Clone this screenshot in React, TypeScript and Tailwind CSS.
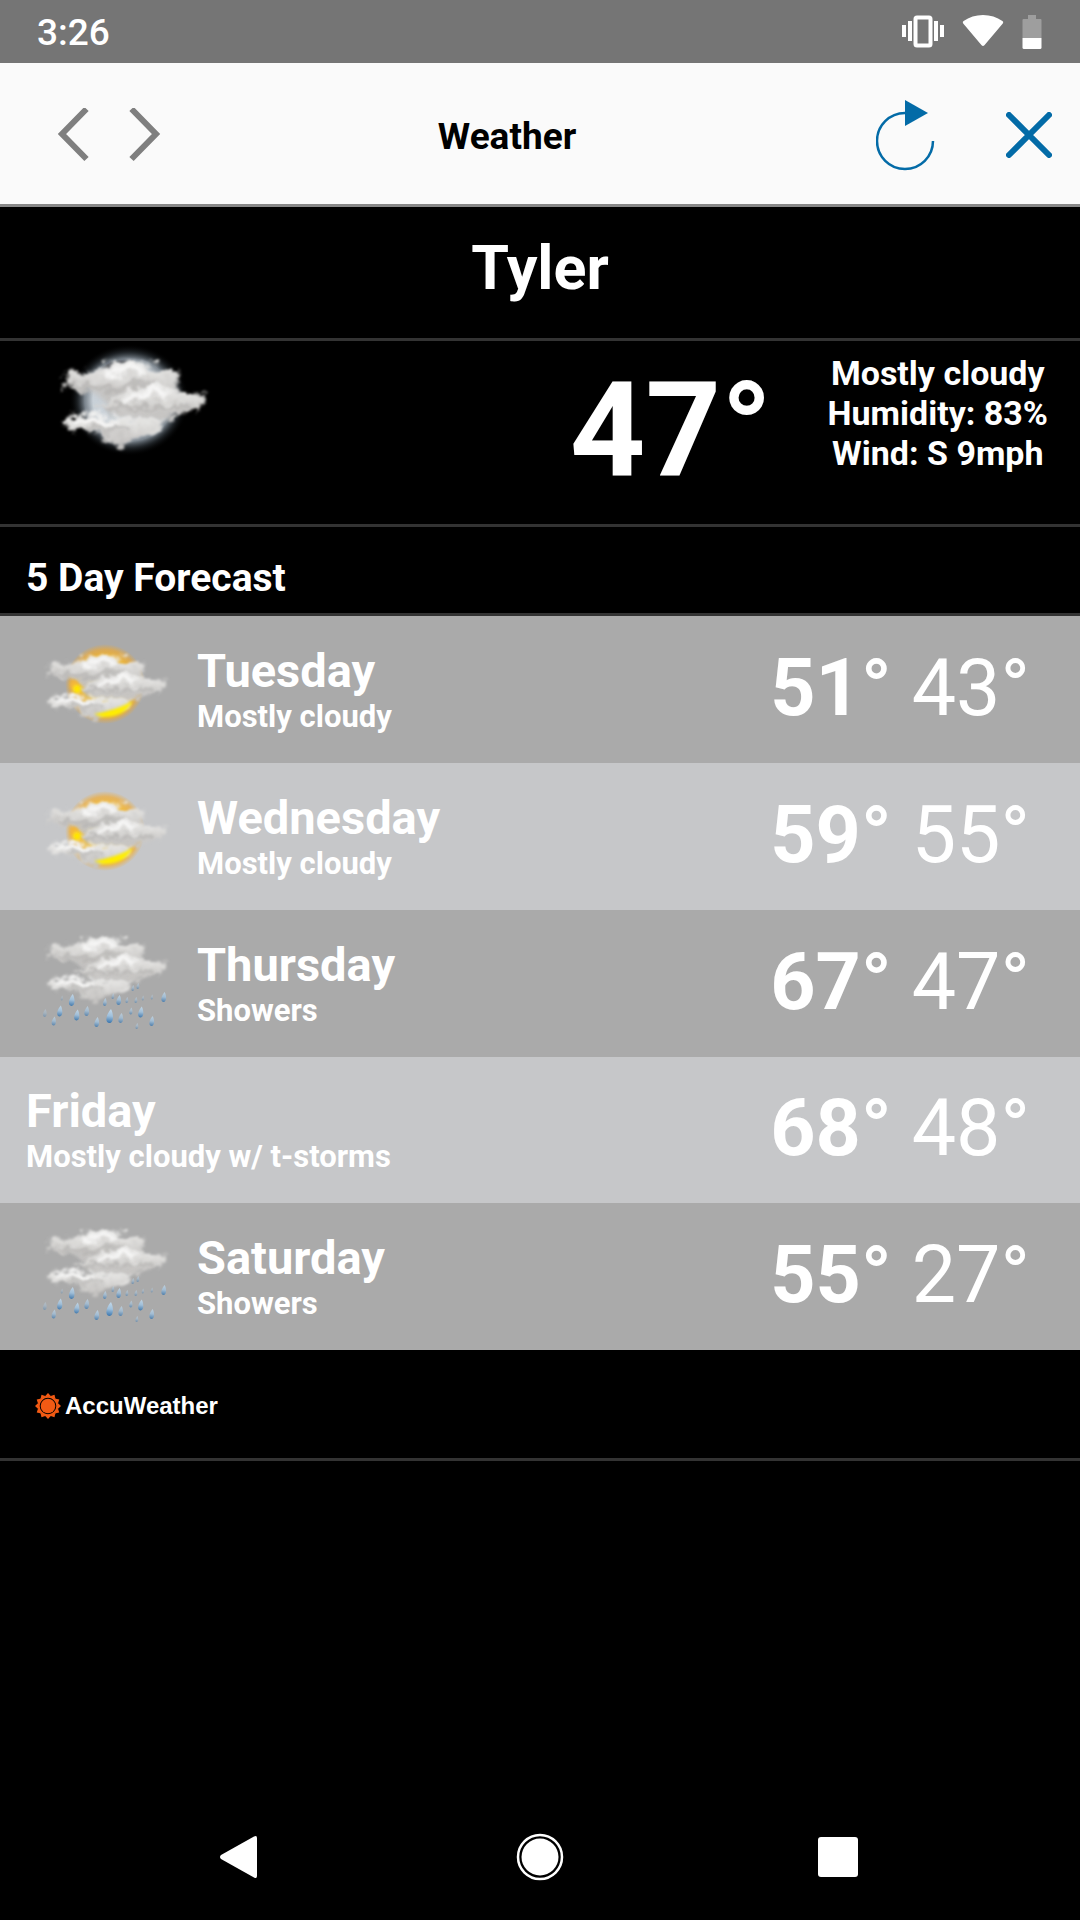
import { useState } from 'react';

type Sky = 'cloudy' | 'showers' | 'none';

type Day = {
  name: string;
  text: string;
  sky: Sky;
  high: number;
  low: number;
};

const days: Day[] = [
  { name: 'Tuesday', text: 'Mostly cloudy', sky: 'cloudy', high: 51, low: 43 },
  { name: 'Wednesday', text: 'Mostly cloudy', sky: 'cloudy', high: 59, low: 55 },
  { name: 'Thursday', text: 'Showers', sky: 'showers', high: 67, low: 47 },
  { name: 'Friday', text: 'Mostly cloudy w/ t-storms', sky: 'none', high: 68, low: 48 },
  { name: 'Saturday', text: 'Showers', sky: 'showers', high: 55, low: 27 },
];

// x, y, length, opacity
const drops = [
  [32, 72, 12, 0.9], [20, 83, 11, 0.9], [14, 93, 9, 0.7], [5, 85, 8, 0.4],
  [37, 87, 11, 0.9], [47, 83, 10, 0.7], [57, 94, 10, 0.8], [70, 88, 14, 1],
  [65, 74, 8, 0.7], [79, 72, 10, 0.8], [81, 90, 10, 0.7], [91, 83, 7, 0.6],
  [101, 84, 11, 0.9], [112, 93, 10, 0.8], [97, 98, 6, 0.5], [124, 69, 10, 0.8],
  [103, 70, 5, 0.4], [93, 60, 6, 0.5], [98, 58, 6, 0.5], [87, 72, 6, 0.5],
  [112, 69, 5, 0.4], [73, 68, 6, 0.5], [96, 72, 6, 0.5], [22, 70, 5, 0.3],
];

// gradients and filters shared by all the weather drawings
function SkyDefs() {
  return (
    <svg width="0" height="0" className="absolute" aria-hidden="true">
      <defs>
        <linearGradient id="cloud" x1="0" y1="0" x2="0" y2="1">
          <stop offset="0" stopColor="#efefee" />
          <stop offset="0.45" stopColor="#dcdbd9" />
          <stop offset="1" stopColor="#c2c0be" />
        </linearGradient>
        <linearGradient id="drop" x1="0" y1="0" x2="0" y2="1">
          <stop offset="0" stopColor="#c3d9ea" />
          <stop offset="0.5" stopColor="#9fc0dc" />
          <stop offset="1" stopColor="#3b76ad" />
        </linearGradient>
        <radialGradient id="sun">
          <stop offset="0" stopColor="#ffe640" />
          <stop offset="0.7" stopColor="#fbb416" />
          <stop offset="0.86" stopColor="#f3a92a" stopOpacity="0.8" />
          <stop offset="1" stopColor="#f3a92a" stopOpacity="0" />
        </radialGradient>
        <radialGradient id="moon">
          <stop offset="0.6" stopColor="#dfe8f0" />
          <stop offset="0.74" stopColor="#a9b6c2" stopOpacity="0.8" />
          <stop offset="0.86" stopColor="#5d6a75" stopOpacity="0.35" />
          <stop offset="1" stopColor="#000000" stopOpacity="0" />
        </radialGradient>
        <filter id="wisp" x="-20%" y="-30%" width="140%" height="160%">
          <feTurbulence type="fractalNoise" baseFrequency="0.1 0.13" numOctaves="4" seed="11" result="noise" />
          <feGaussianBlur in="SourceGraphic" stdDeviation="1.2" result="blurred" />
          <feDisplacementMap in="blurred" in2="noise" scale="15" xChannelSelector="R" yChannelSelector="G" result="torn" />
          <feGaussianBlur in="torn" stdDeviation="0.8" />
        </filter>
        <filter id="soft" x="-30%" y="-30%" width="160%" height="160%">
          <feGaussianBlur stdDeviation="1.8" />
        </filter>
      </defs>
    </svg>
  );
}

function Clouds() {
  return (
    <g fill="url(#cloud)">
      <path
        fill="#c6c5c3"
        opacity="0.85"
        filter="url(#soft)"
        d="M28 34 Q50 28 90 30 Q106 38 106 50 Q104 62 84 68 Q60 66 46 60 Q46 50 28 42Z"
      />
      <g filter="url(#wisp)">
        <path d="M8 40 Q8 30 16 28 Q26 30 40 26 Q48 20 58 20 Q74 19 84 25 Q94 26 104 29 Q104 40 96 43 Q80 47 66 46 Q46 49 30 42 Q18 43 8 40Z" />
      </g>
      <g filter="url(#wisp)">
        <path d="M36 54 Q46 50 58 45 Q72 36 88 38 Q98 43 108 43 Q118 42 124 48 Q128 56 120 57 Q112 58 104 60 Q88 66 70 62 Q50 61 36 54Z" />
      </g>
      <g filter="url(#wisp)">
        <path d="M8 66 Q18 59 34 60 Q50 61 64 63 Q80 64 94 65 Q88 73 76 75 Q68 83 56 83 Q46 82 42 76 Q28 74 18 72 Q10 70 8 66Z" />
      </g>
      <g fill="none" stroke="#ffffff" strokeWidth="5" strokeLinecap="round" filter="url(#wisp)" opacity="0.7">
        <path d="M44 30 Q56 25 74 27" />
        <path d="M60 50 Q76 42 92 45" />
        <path d="M22 65 Q36 63 50 67" />
      </g>
      <g fill="none" stroke="#9f9d9b" strokeWidth="3" strokeLinecap="round" filter="url(#wisp)" opacity="0.5">
        <path d="M22 38 Q36 42 52 42 Q66 36 82 37" />
        <path d="M44 57 Q60 53 74 56 Q94 56 112 54" />
        <path d="M30 71 Q48 73 66 72" />
      </g>
    </g>
  );
}

function CloudySun() {
  return (
    <svg viewBox="0 -1 140 111" className="h-[111px] w-[140px]" aria-hidden="true">
      <circle cx="65" cy="49" r="40" fill="url(#sun)" opacity="0.8" />
      <Clouds />
      <g filter="url(#soft)">
        <ellipse cx="34" cy="50" rx="4" ry="5" fill="#f3b63a" />
        <ellipse cx="37" cy="54" rx="4" ry="4" fill="#ffe500" />
        <path d="M54 79 Q74 76 93 66 Q84 83 62 82Z" fill="#ffee00" />
      </g>
    </svg>
  );
}

function Showers() {
  return (
    <svg viewBox="0 0 140 111" className="h-[111px] w-[140px]" aria-hidden="true">
      <g transform="translate(0 -11)">
        <Clouds />
      </g>
      {drops.map(([x, y, len, opacity]) => (
        <path
          key={`${x}-${y}`}
          transform={`translate(${x} ${y}) rotate(8)`}
          d={`M0 ${-len / 2} C${len / 4} ${-len / 6} ${len / 2.8} ${len / 2} 0 ${len / 2} C${-len / 2.8} ${len / 2} ${-len / 4} ${-len / 6} 0 ${-len / 2}Z`}
          fill="url(#drop)"
          opacity={opacity}
        />
      ))}
    </svg>
  );
}

function CloudyMoon() {
  return (
    <svg viewBox="-2 4 180 130" className="h-[130px] w-[180px]" aria-hidden="true">
      <ellipse cx="81" cy="63" rx="60" ry="56" fill="url(#moon)" opacity="0.9" />
      <path d="M54 32 Q64 21 84 25 L98 33 L62 38Z" fill="#33363a" filter="url(#soft)" />
      <g transform="translate(6 -3) scale(1.2 1.33)">
        <Clouds />
      </g>
    </svg>
  );
}

function StatusBar() {
  return (
    <div className="flex h-[63px] items-center justify-between bg-[#757575] pr-[38px] pl-[37px] text-white">
      <span className="pt-[3px] text-[37px] leading-[44px] font-medium">3:26</span>
      <div className="flex items-center gap-[18px]">
        <svg viewBox="0 0 42 34" className="h-[34px] w-[42px]" fill="#fff" aria-hidden="true">
          <rect x="0" y="10" width="4" height="12" />
          <rect x="6" y="6" width="4" height="20" />
          <rect x="13.5" y="2.5" width="15" height="28" rx="1.5" fill="none" stroke="#fff" strokeWidth="4" />
          <rect x="32" y="6" width="4" height="20" />
          <rect x="38" y="10" width="4" height="12" />
        </svg>
        <svg viewBox="0 0 42 34" className="h-[34px] w-[42px]" fill="#fff" aria-hidden="true">
          <path d="M1.2 8.4 Q0 7 1.6 6 Q10 0 21 0 Q32 0 40.4 6 Q42 7 40.8 8.4 L22.4 30.3 Q21 31.7 19.6 30.3Z" />
        </svg>
        <svg viewBox="0 0 20 34" className="h-[34px] w-[20px]" aria-hidden="true">
          <path d="M6 0h8v4h4.500q1 0 1 1V23H0.500V5q0-1 1-1H6Z" fill="#9e9e9e" />
          <path d="M0.500 23h19v9.500q0 1.500-1.500 1.500h-16q-1.500 0-1.500-1.500Z" fill="#fff" />
        </svg>
      </div>
    </div>
  );
}

function Header() {
  return (
    <header className="flex h-[144px] items-center border-b-[3px] border-[#888888] bg-[#fafafa] pt-0.5 text-black">
      <div className="flex gap-[10px] pl-[44px]">
        <button type="button" aria-label="Back" className="px-3 py-4">
          <svg viewBox="0 1 36 54" className="h-[54px] w-[36px]" fill="none" stroke="#7f7f7f" strokeWidth="6" aria-hidden="true">
            <path d="M30.500 2 L6 27 L30.500 52" />
          </svg>
        </button>
        <button type="button" aria-label="Forward" className="py-4 pr-1.5 pl-3">
          <svg viewBox="0 1 36 54" className="h-[54px] w-[36px]" fill="none" stroke="#7f7f7f" strokeWidth="6" aria-hidden="true">
            <path d="M5.500 2 L30 27 L5.500 52" />
          </svg>
        </button>
      </div>
      <h1 className="flex-1 pt-1 text-center text-[37px] leading-[44px] font-bold">Weather</h1>
      <div className="flex items-center">
        <button type="button" aria-label="Refresh" className="py-4 pr-[31px] pl-[30px]">
          <svg viewBox="0 0 60 72" className="h-[72px] w-[60px]" aria-hidden="true">
            <path d="M29 14 A28 28 0 1 0 57 42" fill="none" stroke="#036ba7" strokeWidth="2.500" />
            <path d="M29 1 L52 14 L29 27Z" fill="#036ba7" />
          </svg>
        </button>
        <button type="button" aria-label="Close" className="py-4 pr-[28px] pl-[39px]">
          <svg viewBox="0 1 46 46" className="size-[46px]" stroke="#036ba7" strokeWidth="6" aria-hidden="true">
            <path d="M3 4 L43 44 M43 4 L3 44" strokeLinecap="round" />
          </svg>
        </button>
      </div>
    </header>
  );
}

function DayRow({ day }: { day: Day }) {
  return (
    <li className="flex min-h-[146px] items-center justify-between bg-[#aaaaaa] py-[18px] pr-[50px] pl-[26px] even:bg-[#c6c7c9]">
      <div className="flex items-center">
        {day.sky !== 'none' && (
          <div className="mr-[17px] ml-[14px]">{day.sky === 'cloudy' ? <CloudySun /> : <Showers />}</div>
        )}
        <div className="pt-0.5">
          <h3 className="text-[47px] leading-[52px] font-bold">{day.name}</h3>
          <p className="text-[31px] leading-[40px] font-bold">{day.text}</p>
        </div>
      </div>
      <p className="flex gap-[20px] pb-1 text-[79px] leading-[92px]">
        <span className="font-bold">{day.high}°</span>
        <span>{day.low}°</span>
      </p>
    </li>
  );
}

function AccuWeatherLogo() {
  const rays = Array.from({ length: 12 }, (_, i) => i * 30);
  return (
    <div className="flex items-center gap-1">
      <svg viewBox="-13 -13 26 26" className="size-[26px]" fill="#f25a14" aria-hidden="true">
        {rays.map((angle) => (
          <path key={angle} transform={`rotate(${angle})`} d="M-3.200 -9.500 L0 -13 L3.200 -9.500Z" />
        ))}
        <circle r="9.300" fill="none" stroke="#f25a14" strokeWidth="2" />
        <circle r="7.300" />
      </svg>
      <span className="font-['Liberation_Sans',Arial,sans-serif] text-[24px] leading-[28px] font-bold">AccuWeather</span>
    </div>
  );
}

function SystemNav() {
  const [active, setActive] = useState('home');
  return (
    <nav className="mt-auto grid h-[126px] grid-cols-3 place-items-center px-[90px]">
      <button type="button" aria-label="System back" onClick={() => setActive('back')}>
        <svg viewBox="0 0 48 48" className="size-12" fill="#fff" aria-hidden="true">
          <path d="M5 22 L38 3.500 Q41 2 41 5 V43 Q41 46 38 44.500 L5 26 Q3 24 5 22Z" />
        </svg>
      </button>
      <button type="button" aria-label="Home" aria-pressed={active === 'home'} onClick={() => setActive('home')}>
        <svg viewBox="0 0 48 48" className="size-12" fill="#fff" aria-hidden="true">
          <circle cx="24" cy="24" r="22" fill="none" stroke="#fff" strokeWidth="2.500" />
          <circle cx="24" cy="24" r="18.500" />
        </svg>
      </button>
      <button type="button" aria-label="Recent apps" onClick={() => setActive('recent')}>
        <svg viewBox="0 0 48 48" className="size-12" fill="#fff" aria-hidden="true">
          <rect x="2" y="4" width="40" height="40" rx="3" />
        </svg>
      </button>
    </nav>
  );
}

export default function App() {
  return (
    <div className="flex min-h-screen flex-col bg-black font-[Roboto,sans-serif] text-white">
      <SkyDefs />
      <StatusBar />
      <Header />
      <main>
        <h2 className="border-b-[3px] border-[#333333] pt-[25px] pb-[34px] text-center text-[61px] leading-[72px] font-bold">
          Tyler
        </h2>
        <section className="flex h-[186px] items-start border-b-[3px] border-[#333333] pr-[32px] pl-[46px]">
          <CloudyMoon />
          <p className="mr-[55px] ml-auto pt-[11px] text-[132px] leading-[156px] font-bold">47°</p>
          <div className="pt-3 text-center text-[34px] leading-[40px] font-bold">
            <p>Mostly cloudy</p>
            <p>Humidity: 83%</p>
            <p>Wind: S 9mph</p>
          </div>
        </section>
        <h2 className="border-b-[3px] border-[#333333] px-[26px] pt-[29px] pb-[13px] text-[39px] leading-[44px] font-bold">
          5 Day Forecast
        </h2>
        <ul>
          {days.map((day) => (
            <DayRow key={day.name} day={day} />
          ))}
        </ul>
        <div className="flex h-[111px] items-center border-b-[3px] border-[#333333] px-[35px] pt-1">
          <a href="#accuweather" aria-label="AccuWeather">
            <AccuWeatherLogo />
          </a>
        </div>
      </main>
      <SystemNav />
    </div>
  );
}
